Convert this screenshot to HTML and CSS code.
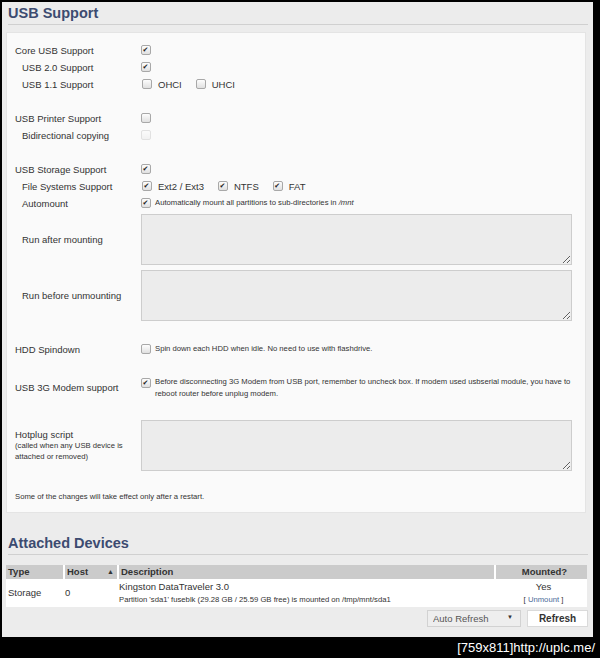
FILE: index.html
```html
<!DOCTYPE html>
<html lang="en">
<head>
  <meta charset="UTF-8">
  <meta name="viewport" content="width=device-width, initial-scale=1.0">
  <title>USB Support</title>
  <link rel="stylesheet" href="styles.css">
</head>
<body>
  <div class="screen">
    <h2 class="section-title">USB Support</h2>

    <!-- USB settings form -->
    <div class="panel">
      <div class="row"><label class="name">Core USB Support</label><div class="value"><input type="checkbox" checked></div></div>
      <div class="row sub"><label class="name">USB 2.0 Support</label><div class="value"><input type="checkbox" checked></div></div>
      <div class="row sub">
        <label class="name">USB 1.1 Support</label>
        <div class="value">
          <span class="opt"><input type="checkbox"> OHCI</span>
          <span class="opt"><input type="checkbox"> UHCI</span>
        </div>
      </div>
      <div class="gap"></div>

      <div class="row"><label class="name">USB Printer Support</label><div class="value"><input type="checkbox"></div></div>
      <div class="row sub"><label class="name">Bidirectional copying</label><div class="value"><input type="checkbox" disabled></div></div>
      <div class="gap"></div>

      <div class="row"><label class="name">USB Storage Support</label><div class="value"><input type="checkbox" checked></div></div>
      <div class="row sub">
        <label class="name">File Systems Support</label>
        <div class="value">
          <span class="opt"><input type="checkbox" checked> Ext2 / Ext3</span>
          <span class="opt"><input type="checkbox" checked> NTFS</span>
          <span class="opt"><input type="checkbox" checked> FAT</span>
        </div>
      </div>
      <div class="row sub">
        <label class="name">Automount</label>
        <div class="value"><input type="checkbox" checked><span class="note">Automatically mount all partitions to sub-directories in <i>/mnt</i></span></div>
      </div>
      <div class="row sub tall"><label class="name">Run after mounting</label><div class="value"><textarea></textarea></div></div>
      <div class="row sub tall"><label class="name">Run before unmounting</label><div class="value"><textarea></textarea></div></div>
      <div class="gap"></div>

      <div class="row">
        <label class="name">HDD Spindown</label>
        <div class="value"><input type="checkbox"><span class="note">Spin down each HDD when idle. No need to use with flashdrive.</span></div>
      </div>
      <div class="gap"></div>

      <div class="row multi">
        <label class="name">USB 3G Modem support</label>
        <div class="value top"><input type="checkbox" checked><span class="note">Before disconnecting 3G Modem from USB port, remember to uncheck box. If modem used usbserial module, you have to reboot router before unplug modem.</span></div>
      </div>
      <div class="gap"></div>

      <div class="row tall">
        <label class="name">Hotplug script<br><small>(called when any USB device is<br>attached or removed)</small></label>
        <div class="value"><textarea></textarea></div>
      </div>
      <div class="gap"></div>

      <p class="footnote">Some of the changes will take effect only after a restart.</p>
    </div>

    <h2 class="section-title second">Attached Devices</h2>
    <table class="devices">
      <thead>
        <tr>
          <th class="col-type">Type</th>
          <th class="col-host">Host <span class="sort">&#9650;</span></th>
          <th class="col-desc">Description</th>
          <th class="col-mounted">Mounted?</th>
        </tr>
      </thead>
      <tbody>
        <tr>
          <td>Storage</td>
          <td>0</td>
          <td>Kingston DataTraveler 3.0<br><small>Partition 'sda1' fuseblk (29.28 GB / 25.59 GB free) is mounted on /tmp/mnt/sda1</small></td>
          <td class="mounted">Yes<br><small>[ <a href="#">Unmount</a> ]</small></td>
        </tr>
      </tbody>
    </table>

    <div class="table-tools">
      <div class="refresh-select">
        <select>
          <option>Auto Refresh</option>
        </select>
        <span class="arrow">&#9660;</span>
      </div>
      <button class="refresh-btn">Refresh</button>
    </div>
  </div>
  <div class="bottom-bar">[759x811]http://uplc.me/</div>
</body>
</html>
```

FILE: styles.css
```css
body {
  margin: 0;
  background: #000;
  font-family: "Liberation Sans", Arial, sans-serif;
  font-size: 9.5px;
  color: #333;
}

.screen {
  margin: 2px 7px 0 2px;
  height: 635px;
  background: #ececec;
  overflow: hidden;
}

.section-title {
  margin: 0 5px 0 6px;
  padding: 1.5px 0 2.5px;
  font-size: 14.5px;
  line-height: 18px;
  color: #3c4b70;
  border-bottom: 1px solid #d0d0d0;
}

.section-title.second {
  margin-top: 19px;
}

.panel {
  margin: 7px 7px 0 4px;
  background: #fafafa;
  border: 1px solid #e4e4e4;
  padding: 8.5px 8px 9.5px;
}

.row {
  display: flex;
  align-items: center;
  min-height: 17px;
}

.row.tall {
  padding: 2.5px 0;
}

.row.multi {
  padding: 1px 0;
}

.name {
  width: 126px;
  flex: none;
  box-sizing: border-box;
}

.row.sub .name {
  padding-left: 7px;
}

.name small {
  font-size: 7.7px;
  line-height: 11px;
  display: inline-block;
}

.value {
  display: flex;
  align-items: center;
}

.value.top {
  align-items: flex-start;
}

.value.top input {
  margin-top: 2px;
}

.opt {
  display: flex;
  align-items: center;
  gap: 6px;
  margin-left: 1px;
  margin-right: 13px;
}

.value > input {
  margin-left: 1px;
}

.gap {
  height: 17px;
}

.note {
  font-size: 7.7px;
  line-height: 12px;
  margin-left: 4px;
}

.footnote {
  margin: 0;
  font-size: 7.7px;
  line-height: 12px;
}

input[type=checkbox] {
  -webkit-appearance: none;
  appearance: none;
  box-sizing: border-box;
  width: 10px;
  height: 10px;
  margin: 0;
  border: 1px solid #a8a8a8;
  border-radius: 2px;
  background: linear-gradient(#fdfdfd, #e0e0e0);
  position: relative;
  flex: none;
}

input[type=checkbox]:checked::before {
  content: "\2714";
  position: absolute;
  left: 0.5px;
  top: 0;
  font-family: "DejaVu Sans", sans-serif;
  font-size: 7px;
  line-height: 8px;
  color: #222;
}

input[type=checkbox]:disabled {
  opacity: 0.3;
}

textarea {
  display: block;
  width: 431px;
  height: 51px;
  box-sizing: border-box;
  margin: 0;
  background: #ececec;
  border: 1px solid #cdcdcd;
  resize: vertical;
}

/* attached devices */
.devices {
  margin: 10px 6px 0 4px;
  width: 581px;
  border-collapse: separate;
  border-spacing: 0;
  background: #fff;
}

.devices th {
  background: #cbcbcb;
  text-align: left;
  font-size: 9.5px;
  line-height: 14px;
  padding: 0 2px;
  color: #333;
}

.devices th + th {
  border-left: 2px solid #fff;
}

.col-type { width: 53px; }
.col-host { width: 48px; }
.col-desc { width: 371px; }

.devices th.col-mounted {
  text-align: center;
  padding-left: 8px;
}

.sort {
  float: right;
  font-size: 7px;
  margin-right: 1px;
}

.devices td {
  padding: 1.5px 2px;
  line-height: 12px;
  vertical-align: middle;
}

.devices td small {
  font-size: 7.7px;
}

.devices td.mounted {
  text-align: center;
  padding-left: 8px;
}

.mounted a {
  color: #4a6a98;
  text-decoration: none;
}

.table-tools {
  display: flex;
  justify-content: flex-end;
  gap: 6px;
  margin: 3px 5px 0 0;
}

.refresh-select {
  position: relative;
}

.refresh-select select {
  -webkit-appearance: none;
  appearance: none;
  width: 94px;
  height: 17px;
  padding: 0 5px;
  font-family: "Liberation Sans", Arial, sans-serif;
  font-size: 9.5px;
  color: #555;
  background: #eeeeee;
  border: 1px solid #d2d2d2;
  border-radius: 0;
}

.refresh-select .arrow {
  position: absolute;
  right: 8px;
  top: 4px;
  font-size: 6px;
  color: #333;
  pointer-events: none;
}

.refresh-btn {
  width: 61px;
  height: 17px;
  padding: 0;
  font-family: "Liberation Sans", Arial, sans-serif;
  font-size: 10px;
  font-weight: bold;
  color: #333;
  background: #fff;
  border: 1px solid #dadada;
}

.bottom-bar {
  height: 21px;
  line-height: 21px;
  padding-right: 5px;
  text-align: right;
  font-size: 13px;
  color: #fff;
}
```
